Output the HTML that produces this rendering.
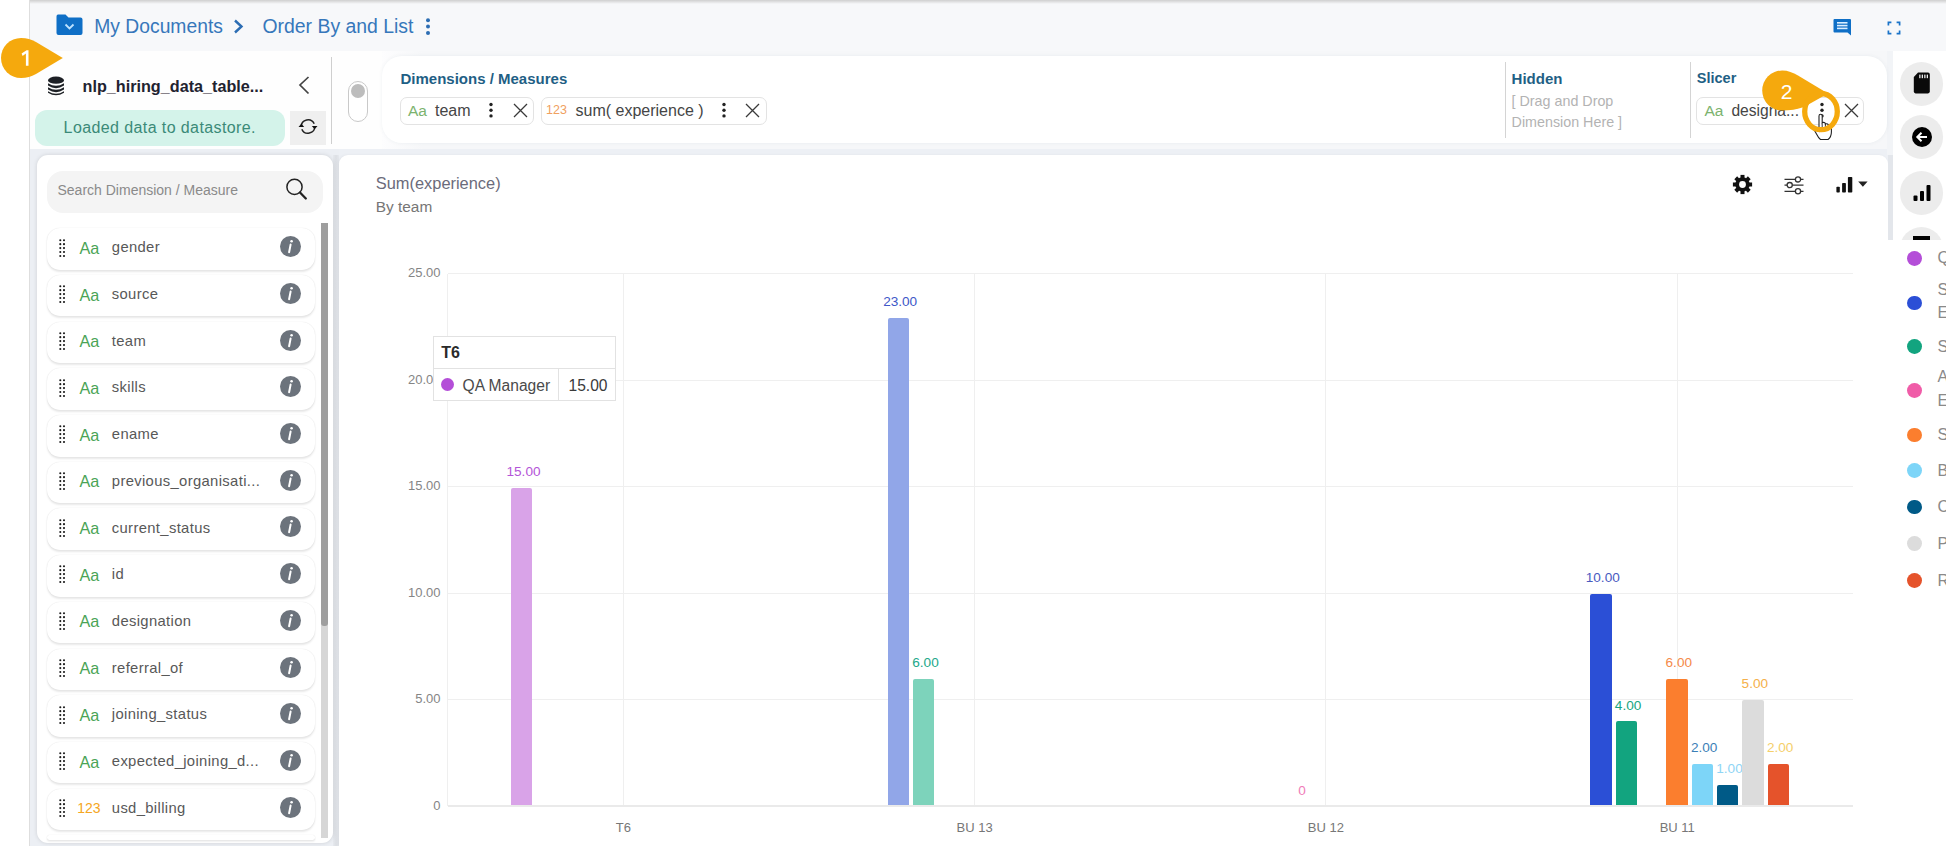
<!DOCTYPE html>
<html><head><meta charset="utf-8"><style>
html,body{margin:0;padding:0;width:1946px;height:846px;overflow:hidden;background:#fff;}
body{position:relative;font-family:"Liberation Sans", sans-serif;}
.t{position:absolute;line-height:1;white-space:nowrap;font-family:"Liberation Sans", sans-serif;}
.r{position:absolute;}
</style></head><body>
<div class="r" style="left:0px;top:0px;width:1946px;height:846px;background:#ffffff;"></div>
<div class="r" style="left:30px;top:51px;width:1916px;height:795px;background:#edf0f5;"></div>
<div class="r" style="left:30px;top:0px;width:1916px;height:51px;background:#f7f8fa;"></div>
<div class="r" style="left:30px;top:0px;width:1916px;height:4px;background:linear-gradient(#cfcfcf,#f7f8fa);"></div>
<div class="r" style="left:29px;top:0px;width:1px;height:846px;background:#dedede;"></div>
<div class="r" style="left:1887px;top:51px;width:6px;height:104px;background:#f2f4f7;"></div>
<div class="r" style="left:30px;top:51px;width:1857px;height:98px;background:#fefefe;"></div>
<div class="r" style="left:382px;top:51px;width:1505px;height:98px;background:linear-gradient(90deg,#fdfdfe,#f6f7f9 40px);"></div>
<svg class="r" style="left:56px;top:14px" width="27" height="22" viewBox="0 0 27 22">
<path d="M2 0.5 H9.5 L12.5 3.5 H24.5 Q26.5 3.5 26.5 5.5 V19 Q26.5 21 24.5 21 H2.5 Q0.5 21 0.5 19 V2.5 Q0.5 0.5 2 0.5Z" fill="#0f6fc6"/>
<path d="M9.5 10.5 L13.5 14.5 L17.5 10.5" stroke="#bfe3ff" stroke-width="1.8" fill="none"/>
</svg>
<div class="t" style="left:94.30px;top:17.06px;font-size:19.3px;color:#3677bb;font-weight:400;">My Documents</div>
<svg class="r" style="left:232px;top:18px" width="14" height="17" viewBox="0 0 14 17"><path d="M3 2.5 L9.5 8.5 L3 14.5" stroke="#2c6db3" stroke-width="2.4" fill="none"/></svg>
<div class="t" style="left:262.50px;top:16.98px;font-size:19.4px;color:#3677bb;font-weight:400;">Order By and List</div>
<svg class="r" style="left:424px;top:17px" width="8" height="20" viewBox="0 0 8 20"><circle cx="4" cy="3.2" r="2" fill="#2c6db3"/><circle cx="4" cy="9.6" r="2" fill="#2c6db3"/><circle cx="4" cy="16" r="2" fill="#2c6db3"/></svg>
<svg class="r" style="left:1833px;top:18px" width="19" height="18" viewBox="0 0 19 18">
<path d="M1.5 1 H17 Q18 1 18 2 V17.5 L14.5 14.5 H1.5 Q0.5 14.5 0.5 13.5 V2 Q0.5 1 1.5 1Z" fill="#0f6fc6"/>
<rect x="4" y="4" width="10.5" height="1.6" fill="#dbeeff"/><rect x="4" y="6.8" width="10.5" height="1.6" fill="#dbeeff"/><rect x="4" y="9.6" width="10.5" height="1.6" fill="#dbeeff"/>
</svg>
<svg class="r" style="left:1887px;top:21px" width="14" height="14" viewBox="0 0 14 14">
<path d="M1.4 4.4 V1.4 H4.4 M9.6 1.4 H12.6 V4.4 M12.6 9.6 V12.6 H9.6 M4.4 12.6 H1.4 V9.6" stroke="#1a73c8" stroke-width="1.7" fill="none"/>
</svg>
<svg class="r" style="left:47px;top:76px" width="18" height="21" viewBox="0 0 18 21">
<ellipse cx="9" cy="4.2" rx="8" ry="3.6" fill="#1d2025"/>
<path d="M1 7.2 Q9 12.5 17 7.2 V9.6 Q9 14.8 1 9.6Z" fill="#1d2025"/>
<path d="M1 11.2 Q9 16.5 17 11.2 V13.6 Q9 18.8 1 13.6Z" fill="#1d2025"/>
<path d="M1 15.2 Q9 20.5 17 15.2 V16.8 Q9 21.8 1 16.8Z" fill="#1d2025"/>
</svg>
<div class="t" style="left:82.50px;top:77.79px;font-size:16.2px;color:#1f2330;font-weight:700;">nlp_hiring_data_table...</div>
<svg class="r" style="left:297px;top:75px" width="14" height="21" viewBox="0 0 14 21"><path d="M11.5 2 L3 10 L11.5 18.5" stroke="#444" stroke-width="1.7" fill="none"/></svg>
<div class="r" style="left:35px;top:110px;width:250px;height:36px;background:#d4f3ea;border-radius:12px;"></div>
<div class="t" style="left:63.60px;top:119.66px;font-size:16px;color:#3b8a78;font-weight:400;letter-spacing:0.4px;">Loaded data to datastore.</div>
<div class="r" style="left:290px;top:111px;width:36px;height:34px;background:#efefef;"></div>
<svg class="r" style="left:297px;top:117px" width="22" height="19" viewBox="0 0 22 19">
<path d="M4.2 9.5 A6.8 6.8 0 0 1 17.2 6.8" stroke="#222" stroke-width="1.5" fill="none"/>
<path d="M17.8 9.5 A6.8 6.8 0 0 1 4.8 12.2" stroke="#222" stroke-width="1.5" fill="none"/>
<path d="M14.8 9 H20.5 L17.6 12.2Z" fill="#111"/>
<path d="M1.5 10 H7.2 L4.4 6.8Z" fill="#111"/>
</svg>
<div class="r" style="left:331px;top:57px;width:1px;height:87px;background:#cfcfcf;"></div>
<div class="r" style="left:348px;top:81px;width:20px;height:41px;background:#ffffff;border:1.6px solid #c9c9c9;border-radius:11px;box-sizing:border-box;"></div>
<div class="r" style="left:351px;top:84px;width:14px;height:14px;border-radius:50%;background:#bdbdbd"></div>
<div class="r" style="left:382px;top:56px;width:1505px;height:87px;background:#ffffff;border-radius:20px;box-shadow:0 0 4px rgba(40,60,90,0.06);"></div>
<div class="t" style="left:400.50px;top:71.40px;font-size:15px;color:#1f5f85;font-weight:700;">Dimensions / Measures</div>
<div class="r" style="left:400px;top:97px;width:134px;height:28px;background:#ffffff;border:1px solid #e3e3e3;border-radius:7px;box-sizing:border-box;"></div>
<div class="t" style="left:408.00px;top:103.08px;font-size:15.5px;color:#7cb36f;font-weight:400;">Aa</div>
<div class="t" style="left:435.00px;top:102.66px;font-size:16px;color:#454545;font-weight:400;">team</div>
<svg class="r" style="left:488.3px;top:102px" width="6" height="17" viewBox="0 0 6 17"><circle cx="3" cy="2.5" r="1.7" fill="#222"/><circle cx="3" cy="8.2" r="1.7" fill="#222"/><circle cx="3" cy="13.9" r="1.7" fill="#222"/></svg>
<svg class="r" style="left:513px;top:103px" width="15" height="15" viewBox="0 0 15 15"><path d="M1 1 L14 14 M14 1 L1 14" stroke="#3a3a3a" stroke-width="1.3" fill="none"/></svg>
<div class="r" style="left:540.5px;top:97px;width:226px;height:28px;background:#ffffff;border:1px solid #e3e3e3;border-radius:7px;box-sizing:border-box;"></div>
<div class="t" style="left:546.00px;top:103.92px;font-size:12.5px;color:#f0a060;font-weight:400;">123</div>
<div class="t" style="left:575.50px;top:102.66px;font-size:16px;color:#454545;font-weight:400;">sum( experience )</div>
<svg class="r" style="left:720.7px;top:102px" width="6" height="17" viewBox="0 0 6 17"><circle cx="3" cy="2.5" r="1.7" fill="#222"/><circle cx="3" cy="8.2" r="1.7" fill="#222"/><circle cx="3" cy="13.9" r="1.7" fill="#222"/></svg>
<svg class="r" style="left:744.6px;top:103px" width="15" height="15" viewBox="0 0 15 15"><path d="M1 1 L14 14 M14 1 L1 14" stroke="#3a3a3a" stroke-width="1.3" fill="none"/></svg>
<div class="r" style="left:1505px;top:62px;width:1px;height:76px;background:#d4d4d4;"></div>
<div class="t" style="left:1511.60px;top:71.30px;font-size:15px;color:#1f5f85;font-weight:700;">Hidden</div>
<div class="t" style="left:1511.60px;top:93.90px;font-size:14.3px;color:#b3b3b3;font-weight:400;">[ Drag and Drop</div>
<div class="t" style="left:1511.60px;top:114.60px;font-size:14.3px;color:#b3b3b3;font-weight:400;">Dimension Here ]</div>
<div class="r" style="left:1690px;top:62px;width:1px;height:76px;background:#d4d4d4;"></div>
<div class="t" style="left:1696.80px;top:71.23px;font-size:14.5px;color:#1f5f85;font-weight:700;">Slicer</div>
<div class="r" style="left:1696.4px;top:97px;width:168px;height:28px;background:#ffffff;border:1px solid #e3e3e3;border-radius:7px;box-sizing:border-box;"></div>
<div class="t" style="left:1704.40px;top:103.08px;font-size:15.5px;color:#7cb36f;font-weight:400;">Aa</div>
<div class="t" style="left:1731.40px;top:102.99px;font-size:15.6px;color:#454545;font-weight:400;">designa...</div>
<svg class="r" style="left:1819px;top:102px" width="6" height="17" viewBox="0 0 6 17"><circle cx="3" cy="2.5" r="1.7" fill="#222"/><circle cx="3" cy="8.2" r="1.7" fill="#222"/><circle cx="3" cy="13.9" r="1.7" fill="#222"/></svg>
<svg class="r" style="left:1843.5px;top:103px" width="15" height="15" viewBox="0 0 15 15"><path d="M1 1 L14 14 M14 1 L1 14" stroke="#3a3a3a" stroke-width="1.3" fill="none"/></svg>
<div class="r" style="left:1893px;top:51px;width:53px;height:795px;background:#ffffff;"></div>
<div class="r" style="left:1899.8px;top:62.3px;width:43.4px;height:43.4px;border-radius:50%;background:#ececec"></div>
<div class="r" style="left:1899.8px;top:115.3px;width:43.4px;height:43.4px;border-radius:50%;background:#ececec"></div>
<div class="r" style="left:1899.8px;top:171.3px;width:43.4px;height:43.4px;border-radius:50%;background:#ececec"></div>
<div class="r" style="left:1899.8px;top:227.3px;width:43.4px;height:43.4px;border-radius:50%;background:#ececec"></div>
<svg class="r" style="left:1912px;top:72px" width="20" height="23" viewBox="0 0 20 23">
<path d="M6 0.6 H16 Q17.8 0.6 17.8 2.4 V19.6 Q17.8 21.4 16 21.4 H3.6 Q1.8 21.4 1.8 19.6 V5Z" fill="#0a0a0a"/>
<rect x="7.2" y="2.6" width="1.3" height="3.6" fill="#ececec"/><rect x="9.7" y="2.6" width="1.3" height="3.6" fill="#ececec"/><rect x="12.2" y="2.6" width="1.3" height="3.6" fill="#ececec"/><rect x="14.7" y="2.6" width="1.3" height="3.6" fill="#ececec"/>
</svg>
<svg class="r" style="left:1911px;top:126px" width="22" height="22" viewBox="0 0 22 22">
<circle cx="11" cy="11" r="10" fill="#000"/>
<path d="M16 11 H6.5 M10.5 6.8 L6.3 11 L10.5 15.2" stroke="#fff" stroke-width="2" fill="none"/>
</svg>
<svg class="r" style="left:1911px;top:182px" width="22" height="22" viewBox="0 0 22 22">
<rect x="2.5" y="13.5" width="4" height="5.5" rx="1" fill="#000"/><rect x="9" y="9" width="4" height="10" rx="1" fill="#000"/><rect x="15.5" y="3" width="4" height="16" rx="1" fill="#000"/>
</svg>
<div class="r" style="left:1913px;top:236px;width:17px;height:4px;background:#000;"></div>
<div class="r" style="left:30px;top:149px;width:309px;height:697px;background:#eceff4;"></div>
<div class="r" style="left:333px;top:155px;width:6px;height:691px;background:linear-gradient(90deg,#e6e9ee,#dcdfe4 50%,#e6e9ee);"></div>
<div class="r" style="left:36.5px;top:155.4px;width:296.5px;height:688px;background:#ffffff;border-radius:11px;box-shadow:0 0 4px rgba(0,0,0,0.13);"></div>
<div class="r" style="left:47.2px;top:170.7px;width:276px;height:42.3px;background:#f4f4f4;border-radius:16px;"></div>
<div class="t" style="left:57.50px;top:183.45px;font-size:14px;color:#8a8a8a;font-weight:400;">Search Dimension / Measure</div>
<svg class="r" style="left:284px;top:176px" width="26" height="26" viewBox="0 0 26 26"><circle cx="10.5" cy="10.9" r="7.6" stroke="#222" stroke-width="1.5" fill="none"/><path d="M16 16.5 L21.8 22.5" stroke="#222" stroke-width="2.3" stroke-linecap="round"/></svg>
<div class="r" style="left:46.6px;top:228.2px;width:268.8px;height:41.5px;background:#ffffff;border-radius:13px;box-shadow:0 1.5px 2px rgba(0,0,0,0.09),0 0 1px rgba(0,0,0,0.12);"></div>
<svg class="r" style="left:58.6px;top:238.50px" width="7" height="19" viewBox="0 0 7 19"><circle cx="1.3" cy="1.20" r="1.05" fill="#1a1a1a"/><circle cx="5" cy="1.20" r="1.05" fill="#1a1a1a"/><circle cx="1.3" cy="5.15" r="1.05" fill="#1a1a1a"/><circle cx="5" cy="5.15" r="1.05" fill="#1a1a1a"/><circle cx="1.3" cy="9.10" r="1.05" fill="#1a1a1a"/><circle cx="5" cy="9.10" r="1.05" fill="#1a1a1a"/><circle cx="1.3" cy="13.05" r="1.05" fill="#1a1a1a"/><circle cx="5" cy="13.05" r="1.05" fill="#1a1a1a"/><circle cx="1.3" cy="17.00" r="1.05" fill="#1a1a1a"/><circle cx="5" cy="17.00" r="1.05" fill="#1a1a1a"/></svg>
<div class="t" style="left:79.40px;top:239.89px;font-size:16.2px;color:#4aa456;font-weight:400;">Aa</div>
<div class="t" style="left:111.80px;top:240.37px;font-size:14.8px;color:#585858;font-weight:400;letter-spacing:0.35px;">gender</div>
<div class="r" style="left:280.0px;top:236.20px;width:21px;height:21px;border-radius:50%;background:#6c737c"></div>
<svg class="r" style="left:284px;top:236.20px" width="13" height="21" viewBox="0 0 13 21"><circle cx="7.6" cy="5.3" r="1.3" fill="#fff"/><path d="M6.6 8.6 L5.1 16.2" stroke="#fff" stroke-width="2" stroke-linecap="round"/></svg>
<div class="r" style="left:46.6px;top:274.9px;width:268.8px;height:41.5px;background:#ffffff;border-radius:13px;box-shadow:0 1.5px 2px rgba(0,0,0,0.09),0 0 1px rgba(0,0,0,0.12);"></div>
<svg class="r" style="left:58.6px;top:285.20px" width="7" height="19" viewBox="0 0 7 19"><circle cx="1.3" cy="1.20" r="1.05" fill="#1a1a1a"/><circle cx="5" cy="1.20" r="1.05" fill="#1a1a1a"/><circle cx="1.3" cy="5.15" r="1.05" fill="#1a1a1a"/><circle cx="5" cy="5.15" r="1.05" fill="#1a1a1a"/><circle cx="1.3" cy="9.10" r="1.05" fill="#1a1a1a"/><circle cx="5" cy="9.10" r="1.05" fill="#1a1a1a"/><circle cx="1.3" cy="13.05" r="1.05" fill="#1a1a1a"/><circle cx="5" cy="13.05" r="1.05" fill="#1a1a1a"/><circle cx="1.3" cy="17.00" r="1.05" fill="#1a1a1a"/><circle cx="5" cy="17.00" r="1.05" fill="#1a1a1a"/></svg>
<div class="t" style="left:79.40px;top:286.59px;font-size:16.2px;color:#4aa456;font-weight:400;">Aa</div>
<div class="t" style="left:111.80px;top:287.07px;font-size:14.8px;color:#585858;font-weight:400;letter-spacing:0.35px;">source</div>
<div class="r" style="left:280.0px;top:282.90px;width:21px;height:21px;border-radius:50%;background:#6c737c"></div>
<svg class="r" style="left:284px;top:282.90px" width="13" height="21" viewBox="0 0 13 21"><circle cx="7.6" cy="5.3" r="1.3" fill="#fff"/><path d="M6.6 8.6 L5.1 16.2" stroke="#fff" stroke-width="2" stroke-linecap="round"/></svg>
<div class="r" style="left:46.6px;top:321.6px;width:268.8px;height:41.5px;background:#ffffff;border-radius:13px;box-shadow:0 1.5px 2px rgba(0,0,0,0.09),0 0 1px rgba(0,0,0,0.12);"></div>
<svg class="r" style="left:58.6px;top:331.90px" width="7" height="19" viewBox="0 0 7 19"><circle cx="1.3" cy="1.20" r="1.05" fill="#1a1a1a"/><circle cx="5" cy="1.20" r="1.05" fill="#1a1a1a"/><circle cx="1.3" cy="5.15" r="1.05" fill="#1a1a1a"/><circle cx="5" cy="5.15" r="1.05" fill="#1a1a1a"/><circle cx="1.3" cy="9.10" r="1.05" fill="#1a1a1a"/><circle cx="5" cy="9.10" r="1.05" fill="#1a1a1a"/><circle cx="1.3" cy="13.05" r="1.05" fill="#1a1a1a"/><circle cx="5" cy="13.05" r="1.05" fill="#1a1a1a"/><circle cx="1.3" cy="17.00" r="1.05" fill="#1a1a1a"/><circle cx="5" cy="17.00" r="1.05" fill="#1a1a1a"/></svg>
<div class="t" style="left:79.40px;top:333.29px;font-size:16.2px;color:#4aa456;font-weight:400;">Aa</div>
<div class="t" style="left:111.80px;top:333.77px;font-size:14.8px;color:#585858;font-weight:400;letter-spacing:0.35px;">team</div>
<div class="r" style="left:280.0px;top:329.60px;width:21px;height:21px;border-radius:50%;background:#6c737c"></div>
<svg class="r" style="left:284px;top:329.60px" width="13" height="21" viewBox="0 0 13 21"><circle cx="7.6" cy="5.3" r="1.3" fill="#fff"/><path d="M6.6 8.6 L5.1 16.2" stroke="#fff" stroke-width="2" stroke-linecap="round"/></svg>
<div class="r" style="left:46.6px;top:368.3px;width:268.8px;height:41.5px;background:#ffffff;border-radius:13px;box-shadow:0 1.5px 2px rgba(0,0,0,0.09),0 0 1px rgba(0,0,0,0.12);"></div>
<svg class="r" style="left:58.6px;top:378.60px" width="7" height="19" viewBox="0 0 7 19"><circle cx="1.3" cy="1.20" r="1.05" fill="#1a1a1a"/><circle cx="5" cy="1.20" r="1.05" fill="#1a1a1a"/><circle cx="1.3" cy="5.15" r="1.05" fill="#1a1a1a"/><circle cx="5" cy="5.15" r="1.05" fill="#1a1a1a"/><circle cx="1.3" cy="9.10" r="1.05" fill="#1a1a1a"/><circle cx="5" cy="9.10" r="1.05" fill="#1a1a1a"/><circle cx="1.3" cy="13.05" r="1.05" fill="#1a1a1a"/><circle cx="5" cy="13.05" r="1.05" fill="#1a1a1a"/><circle cx="1.3" cy="17.00" r="1.05" fill="#1a1a1a"/><circle cx="5" cy="17.00" r="1.05" fill="#1a1a1a"/></svg>
<div class="t" style="left:79.40px;top:379.99px;font-size:16.2px;color:#4aa456;font-weight:400;">Aa</div>
<div class="t" style="left:111.80px;top:380.47px;font-size:14.8px;color:#585858;font-weight:400;letter-spacing:0.35px;">skills</div>
<div class="r" style="left:280.0px;top:376.30px;width:21px;height:21px;border-radius:50%;background:#6c737c"></div>
<svg class="r" style="left:284px;top:376.30px" width="13" height="21" viewBox="0 0 13 21"><circle cx="7.6" cy="5.3" r="1.3" fill="#fff"/><path d="M6.6 8.6 L5.1 16.2" stroke="#fff" stroke-width="2" stroke-linecap="round"/></svg>
<div class="r" style="left:46.6px;top:415.0px;width:268.8px;height:41.5px;background:#ffffff;border-radius:13px;box-shadow:0 1.5px 2px rgba(0,0,0,0.09),0 0 1px rgba(0,0,0,0.12);"></div>
<svg class="r" style="left:58.6px;top:425.30px" width="7" height="19" viewBox="0 0 7 19"><circle cx="1.3" cy="1.20" r="1.05" fill="#1a1a1a"/><circle cx="5" cy="1.20" r="1.05" fill="#1a1a1a"/><circle cx="1.3" cy="5.15" r="1.05" fill="#1a1a1a"/><circle cx="5" cy="5.15" r="1.05" fill="#1a1a1a"/><circle cx="1.3" cy="9.10" r="1.05" fill="#1a1a1a"/><circle cx="5" cy="9.10" r="1.05" fill="#1a1a1a"/><circle cx="1.3" cy="13.05" r="1.05" fill="#1a1a1a"/><circle cx="5" cy="13.05" r="1.05" fill="#1a1a1a"/><circle cx="1.3" cy="17.00" r="1.05" fill="#1a1a1a"/><circle cx="5" cy="17.00" r="1.05" fill="#1a1a1a"/></svg>
<div class="t" style="left:79.40px;top:426.69px;font-size:16.2px;color:#4aa456;font-weight:400;">Aa</div>
<div class="t" style="left:111.80px;top:427.17px;font-size:14.8px;color:#585858;font-weight:400;letter-spacing:0.35px;">ename</div>
<div class="r" style="left:280.0px;top:423.00px;width:21px;height:21px;border-radius:50%;background:#6c737c"></div>
<svg class="r" style="left:284px;top:423.00px" width="13" height="21" viewBox="0 0 13 21"><circle cx="7.6" cy="5.3" r="1.3" fill="#fff"/><path d="M6.6 8.6 L5.1 16.2" stroke="#fff" stroke-width="2" stroke-linecap="round"/></svg>
<div class="r" style="left:46.6px;top:461.7px;width:268.8px;height:41.5px;background:#ffffff;border-radius:13px;box-shadow:0 1.5px 2px rgba(0,0,0,0.09),0 0 1px rgba(0,0,0,0.12);"></div>
<svg class="r" style="left:58.6px;top:472.00px" width="7" height="19" viewBox="0 0 7 19"><circle cx="1.3" cy="1.20" r="1.05" fill="#1a1a1a"/><circle cx="5" cy="1.20" r="1.05" fill="#1a1a1a"/><circle cx="1.3" cy="5.15" r="1.05" fill="#1a1a1a"/><circle cx="5" cy="5.15" r="1.05" fill="#1a1a1a"/><circle cx="1.3" cy="9.10" r="1.05" fill="#1a1a1a"/><circle cx="5" cy="9.10" r="1.05" fill="#1a1a1a"/><circle cx="1.3" cy="13.05" r="1.05" fill="#1a1a1a"/><circle cx="5" cy="13.05" r="1.05" fill="#1a1a1a"/><circle cx="1.3" cy="17.00" r="1.05" fill="#1a1a1a"/><circle cx="5" cy="17.00" r="1.05" fill="#1a1a1a"/></svg>
<div class="t" style="left:79.40px;top:473.39px;font-size:16.2px;color:#4aa456;font-weight:400;">Aa</div>
<div class="t" style="left:111.80px;top:473.87px;font-size:14.8px;color:#585858;font-weight:400;letter-spacing:0.35px;">previous_organisati...</div>
<div class="r" style="left:280.0px;top:469.70px;width:21px;height:21px;border-radius:50%;background:#6c737c"></div>
<svg class="r" style="left:284px;top:469.70px" width="13" height="21" viewBox="0 0 13 21"><circle cx="7.6" cy="5.3" r="1.3" fill="#fff"/><path d="M6.6 8.6 L5.1 16.2" stroke="#fff" stroke-width="2" stroke-linecap="round"/></svg>
<div class="r" style="left:46.6px;top:508.4px;width:268.8px;height:41.5px;background:#ffffff;border-radius:13px;box-shadow:0 1.5px 2px rgba(0,0,0,0.09),0 0 1px rgba(0,0,0,0.12);"></div>
<svg class="r" style="left:58.6px;top:518.70px" width="7" height="19" viewBox="0 0 7 19"><circle cx="1.3" cy="1.20" r="1.05" fill="#1a1a1a"/><circle cx="5" cy="1.20" r="1.05" fill="#1a1a1a"/><circle cx="1.3" cy="5.15" r="1.05" fill="#1a1a1a"/><circle cx="5" cy="5.15" r="1.05" fill="#1a1a1a"/><circle cx="1.3" cy="9.10" r="1.05" fill="#1a1a1a"/><circle cx="5" cy="9.10" r="1.05" fill="#1a1a1a"/><circle cx="1.3" cy="13.05" r="1.05" fill="#1a1a1a"/><circle cx="5" cy="13.05" r="1.05" fill="#1a1a1a"/><circle cx="1.3" cy="17.00" r="1.05" fill="#1a1a1a"/><circle cx="5" cy="17.00" r="1.05" fill="#1a1a1a"/></svg>
<div class="t" style="left:79.40px;top:520.09px;font-size:16.2px;color:#4aa456;font-weight:400;">Aa</div>
<div class="t" style="left:111.80px;top:520.57px;font-size:14.8px;color:#585858;font-weight:400;letter-spacing:0.35px;">current_status</div>
<div class="r" style="left:280.0px;top:516.40px;width:21px;height:21px;border-radius:50%;background:#6c737c"></div>
<svg class="r" style="left:284px;top:516.40px" width="13" height="21" viewBox="0 0 13 21"><circle cx="7.6" cy="5.3" r="1.3" fill="#fff"/><path d="M6.6 8.6 L5.1 16.2" stroke="#fff" stroke-width="2" stroke-linecap="round"/></svg>
<div class="r" style="left:46.6px;top:555.1px;width:268.8px;height:41.5px;background:#ffffff;border-radius:13px;box-shadow:0 1.5px 2px rgba(0,0,0,0.09),0 0 1px rgba(0,0,0,0.12);"></div>
<svg class="r" style="left:58.6px;top:565.40px" width="7" height="19" viewBox="0 0 7 19"><circle cx="1.3" cy="1.20" r="1.05" fill="#1a1a1a"/><circle cx="5" cy="1.20" r="1.05" fill="#1a1a1a"/><circle cx="1.3" cy="5.15" r="1.05" fill="#1a1a1a"/><circle cx="5" cy="5.15" r="1.05" fill="#1a1a1a"/><circle cx="1.3" cy="9.10" r="1.05" fill="#1a1a1a"/><circle cx="5" cy="9.10" r="1.05" fill="#1a1a1a"/><circle cx="1.3" cy="13.05" r="1.05" fill="#1a1a1a"/><circle cx="5" cy="13.05" r="1.05" fill="#1a1a1a"/><circle cx="1.3" cy="17.00" r="1.05" fill="#1a1a1a"/><circle cx="5" cy="17.00" r="1.05" fill="#1a1a1a"/></svg>
<div class="t" style="left:79.40px;top:566.79px;font-size:16.2px;color:#4aa456;font-weight:400;">Aa</div>
<div class="t" style="left:111.80px;top:567.27px;font-size:14.8px;color:#585858;font-weight:400;letter-spacing:0.35px;">id</div>
<div class="r" style="left:280.0px;top:563.10px;width:21px;height:21px;border-radius:50%;background:#6c737c"></div>
<svg class="r" style="left:284px;top:563.10px" width="13" height="21" viewBox="0 0 13 21"><circle cx="7.6" cy="5.3" r="1.3" fill="#fff"/><path d="M6.6 8.6 L5.1 16.2" stroke="#fff" stroke-width="2" stroke-linecap="round"/></svg>
<div class="r" style="left:46.6px;top:601.8px;width:268.8px;height:41.5px;background:#ffffff;border-radius:13px;box-shadow:0 1.5px 2px rgba(0,0,0,0.09),0 0 1px rgba(0,0,0,0.12);"></div>
<svg class="r" style="left:58.6px;top:612.10px" width="7" height="19" viewBox="0 0 7 19"><circle cx="1.3" cy="1.20" r="1.05" fill="#1a1a1a"/><circle cx="5" cy="1.20" r="1.05" fill="#1a1a1a"/><circle cx="1.3" cy="5.15" r="1.05" fill="#1a1a1a"/><circle cx="5" cy="5.15" r="1.05" fill="#1a1a1a"/><circle cx="1.3" cy="9.10" r="1.05" fill="#1a1a1a"/><circle cx="5" cy="9.10" r="1.05" fill="#1a1a1a"/><circle cx="1.3" cy="13.05" r="1.05" fill="#1a1a1a"/><circle cx="5" cy="13.05" r="1.05" fill="#1a1a1a"/><circle cx="1.3" cy="17.00" r="1.05" fill="#1a1a1a"/><circle cx="5" cy="17.00" r="1.05" fill="#1a1a1a"/></svg>
<div class="t" style="left:79.40px;top:613.49px;font-size:16.2px;color:#4aa456;font-weight:400;">Aa</div>
<div class="t" style="left:111.80px;top:613.97px;font-size:14.8px;color:#585858;font-weight:400;letter-spacing:0.35px;">designation</div>
<div class="r" style="left:280.0px;top:609.80px;width:21px;height:21px;border-radius:50%;background:#6c737c"></div>
<svg class="r" style="left:284px;top:609.80px" width="13" height="21" viewBox="0 0 13 21"><circle cx="7.6" cy="5.3" r="1.3" fill="#fff"/><path d="M6.6 8.6 L5.1 16.2" stroke="#fff" stroke-width="2" stroke-linecap="round"/></svg>
<div class="r" style="left:46.6px;top:648.5px;width:268.8px;height:41.5px;background:#ffffff;border-radius:13px;box-shadow:0 1.5px 2px rgba(0,0,0,0.09),0 0 1px rgba(0,0,0,0.12);"></div>
<svg class="r" style="left:58.6px;top:658.80px" width="7" height="19" viewBox="0 0 7 19"><circle cx="1.3" cy="1.20" r="1.05" fill="#1a1a1a"/><circle cx="5" cy="1.20" r="1.05" fill="#1a1a1a"/><circle cx="1.3" cy="5.15" r="1.05" fill="#1a1a1a"/><circle cx="5" cy="5.15" r="1.05" fill="#1a1a1a"/><circle cx="1.3" cy="9.10" r="1.05" fill="#1a1a1a"/><circle cx="5" cy="9.10" r="1.05" fill="#1a1a1a"/><circle cx="1.3" cy="13.05" r="1.05" fill="#1a1a1a"/><circle cx="5" cy="13.05" r="1.05" fill="#1a1a1a"/><circle cx="1.3" cy="17.00" r="1.05" fill="#1a1a1a"/><circle cx="5" cy="17.00" r="1.05" fill="#1a1a1a"/></svg>
<div class="t" style="left:79.40px;top:660.19px;font-size:16.2px;color:#4aa456;font-weight:400;">Aa</div>
<div class="t" style="left:111.80px;top:660.67px;font-size:14.8px;color:#585858;font-weight:400;letter-spacing:0.35px;">referral_of</div>
<div class="r" style="left:280.0px;top:656.50px;width:21px;height:21px;border-radius:50%;background:#6c737c"></div>
<svg class="r" style="left:284px;top:656.50px" width="13" height="21" viewBox="0 0 13 21"><circle cx="7.6" cy="5.3" r="1.3" fill="#fff"/><path d="M6.6 8.6 L5.1 16.2" stroke="#fff" stroke-width="2" stroke-linecap="round"/></svg>
<div class="r" style="left:46.6px;top:695.2px;width:268.8px;height:41.5px;background:#ffffff;border-radius:13px;box-shadow:0 1.5px 2px rgba(0,0,0,0.09),0 0 1px rgba(0,0,0,0.12);"></div>
<svg class="r" style="left:58.6px;top:705.50px" width="7" height="19" viewBox="0 0 7 19"><circle cx="1.3" cy="1.20" r="1.05" fill="#1a1a1a"/><circle cx="5" cy="1.20" r="1.05" fill="#1a1a1a"/><circle cx="1.3" cy="5.15" r="1.05" fill="#1a1a1a"/><circle cx="5" cy="5.15" r="1.05" fill="#1a1a1a"/><circle cx="1.3" cy="9.10" r="1.05" fill="#1a1a1a"/><circle cx="5" cy="9.10" r="1.05" fill="#1a1a1a"/><circle cx="1.3" cy="13.05" r="1.05" fill="#1a1a1a"/><circle cx="5" cy="13.05" r="1.05" fill="#1a1a1a"/><circle cx="1.3" cy="17.00" r="1.05" fill="#1a1a1a"/><circle cx="5" cy="17.00" r="1.05" fill="#1a1a1a"/></svg>
<div class="t" style="left:79.40px;top:706.89px;font-size:16.2px;color:#4aa456;font-weight:400;">Aa</div>
<div class="t" style="left:111.80px;top:707.37px;font-size:14.8px;color:#585858;font-weight:400;letter-spacing:0.35px;">joining_status</div>
<div class="r" style="left:280.0px;top:703.20px;width:21px;height:21px;border-radius:50%;background:#6c737c"></div>
<svg class="r" style="left:284px;top:703.20px" width="13" height="21" viewBox="0 0 13 21"><circle cx="7.6" cy="5.3" r="1.3" fill="#fff"/><path d="M6.6 8.6 L5.1 16.2" stroke="#fff" stroke-width="2" stroke-linecap="round"/></svg>
<div class="r" style="left:46.6px;top:741.9px;width:268.8px;height:41.5px;background:#ffffff;border-radius:13px;box-shadow:0 1.5px 2px rgba(0,0,0,0.09),0 0 1px rgba(0,0,0,0.12);"></div>
<svg class="r" style="left:58.6px;top:752.20px" width="7" height="19" viewBox="0 0 7 19"><circle cx="1.3" cy="1.20" r="1.05" fill="#1a1a1a"/><circle cx="5" cy="1.20" r="1.05" fill="#1a1a1a"/><circle cx="1.3" cy="5.15" r="1.05" fill="#1a1a1a"/><circle cx="5" cy="5.15" r="1.05" fill="#1a1a1a"/><circle cx="1.3" cy="9.10" r="1.05" fill="#1a1a1a"/><circle cx="5" cy="9.10" r="1.05" fill="#1a1a1a"/><circle cx="1.3" cy="13.05" r="1.05" fill="#1a1a1a"/><circle cx="5" cy="13.05" r="1.05" fill="#1a1a1a"/><circle cx="1.3" cy="17.00" r="1.05" fill="#1a1a1a"/><circle cx="5" cy="17.00" r="1.05" fill="#1a1a1a"/></svg>
<div class="t" style="left:79.40px;top:753.59px;font-size:16.2px;color:#4aa456;font-weight:400;">Aa</div>
<div class="t" style="left:111.80px;top:754.07px;font-size:14.8px;color:#585858;font-weight:400;letter-spacing:0.35px;">expected_joining_d...</div>
<div class="r" style="left:280.0px;top:749.90px;width:21px;height:21px;border-radius:50%;background:#6c737c"></div>
<svg class="r" style="left:284px;top:749.90px" width="13" height="21" viewBox="0 0 13 21"><circle cx="7.6" cy="5.3" r="1.3" fill="#fff"/><path d="M6.6 8.6 L5.1 16.2" stroke="#fff" stroke-width="2" stroke-linecap="round"/></svg>
<div class="r" style="left:46.6px;top:788.6px;width:268.8px;height:41.5px;background:#ffffff;border-radius:13px;box-shadow:0 1.5px 2px rgba(0,0,0,0.09),0 0 1px rgba(0,0,0,0.12);"></div>
<svg class="r" style="left:58.6px;top:798.90px" width="7" height="19" viewBox="0 0 7 19"><circle cx="1.3" cy="1.20" r="1.05" fill="#1a1a1a"/><circle cx="5" cy="1.20" r="1.05" fill="#1a1a1a"/><circle cx="1.3" cy="5.15" r="1.05" fill="#1a1a1a"/><circle cx="5" cy="5.15" r="1.05" fill="#1a1a1a"/><circle cx="1.3" cy="9.10" r="1.05" fill="#1a1a1a"/><circle cx="5" cy="9.10" r="1.05" fill="#1a1a1a"/><circle cx="1.3" cy="13.05" r="1.05" fill="#1a1a1a"/><circle cx="5" cy="13.05" r="1.05" fill="#1a1a1a"/><circle cx="1.3" cy="17.00" r="1.05" fill="#1a1a1a"/><circle cx="5" cy="17.00" r="1.05" fill="#1a1a1a"/></svg>
<div class="t" style="left:77.30px;top:800.85px;font-size:14px;color:#f5a623;font-weight:400;">123</div>
<div class="t" style="left:111.80px;top:800.77px;font-size:14.8px;color:#585858;font-weight:400;letter-spacing:0.35px;">usd_billing</div>
<div class="r" style="left:280.0px;top:796.60px;width:21px;height:21px;border-radius:50%;background:#6c737c"></div>
<svg class="r" style="left:284px;top:796.60px" width="13" height="21" viewBox="0 0 13 21"><circle cx="7.6" cy="5.3" r="1.3" fill="#fff"/><path d="M6.6 8.6 L5.1 16.2" stroke="#fff" stroke-width="2" stroke-linecap="round"/></svg>
<div class="r" style="left:46.6px;top:835.3px;width:268.8px;height:5px;background:#ffffff;border-radius:13px;box-shadow:0 1.5px 2px rgba(0,0,0,0.09),0 0 1px rgba(0,0,0,0.12);"></div>
<div class="r" style="left:321px;top:223.4px;width:7px;height:614.6px;background:#d6d6d6;"></div>
<div class="r" style="left:321px;top:223.4px;width:7px;height:403px;background:#9e9e9e;border-radius:0 0 3px 3px;"></div>
<div class="r" style="left:339px;top:155px;width:1549px;height:691px;background:#ffffff;border-radius:9px 9px 0 0;box-shadow:-1px 0 3px rgba(0,0,0,0.05);"></div>
<div class="r" style="left:1888px;top:155px;width:5px;height:85px;background:#e3e6eb;"></div>
<div class="t" style="left:375.80px;top:174.92px;font-size:16.4px;color:#6b6b7b;font-weight:400;">Sum(experience)</div>
<div class="t" style="left:375.80px;top:198.96px;font-size:15.4px;color:#767676;font-weight:400;">By team</div>
<svg class="r" style="left:1732px;top:174px" width="21" height="21" viewBox="0 0 21 21">
<g transform="translate(10.5 10.5)" fill="#111">
<circle r="7.2"/>
<rect x="-2" y="-9.6" width="4" height="4" transform="rotate(0)"/><rect x="-2" y="-9.6" width="4" height="4" transform="rotate(45)"/><rect x="-2" y="-9.6" width="4" height="4" transform="rotate(90)"/><rect x="-2" y="-9.6" width="4" height="4" transform="rotate(135)"/><rect x="-2" y="-9.6" width="4" height="4" transform="rotate(180)"/><rect x="-2" y="-9.6" width="4" height="4" transform="rotate(225)"/><rect x="-2" y="-9.6" width="4" height="4" transform="rotate(270)"/><rect x="-2" y="-9.6" width="4" height="4" transform="rotate(315)"/>
<circle r="3.4" fill="#fff"/>
</g></svg>
<svg class="r" style="left:1783px;top:175px" width="22" height="20" viewBox="0 0 22 20">
<path d="M1.5 4.4 H20.5 M1.5 10.1 H20.5 M1.5 16.3 H20.5" stroke="#333" stroke-width="1.3"/>
<circle cx="15" cy="4.4" r="2.6" fill="#fff" stroke="#333" stroke-width="1.3"/>
<circle cx="6.7" cy="10.1" r="2.6" fill="#fff" stroke="#333" stroke-width="1.3"/>
<circle cx="15" cy="16.3" r="2.6" fill="#fff" stroke="#333" stroke-width="1.3"/>
</svg>
<svg class="r" style="left:1835px;top:176px" width="34" height="18" viewBox="0 0 34 18">
<rect x="1.4" y="10.8" width="3.4" height="5.8" rx="0.8" fill="#111"/><rect x="7.1" y="7" width="3.8" height="9.6" rx="0.8" fill="#111"/><rect x="12.9" y="1" width="4.4" height="15.6" rx="0.8" fill="#111"/>
<path d="M23.2 5.4 H32.6 L27.9 10.8Z" fill="#222"/>
</svg>
<div class="r" style="left:447.7px;top:699.0px;width:1405.3px;height:1px;background:#efefef;"></div>
<div class="r" style="left:447.7px;top:592.5px;width:1405.3px;height:1px;background:#efefef;"></div>
<div class="r" style="left:447.7px;top:486.0px;width:1405.3px;height:1px;background:#efefef;"></div>
<div class="r" style="left:447.7px;top:379.5px;width:1405.3px;height:1px;background:#efefef;"></div>
<div class="r" style="left:447.7px;top:273.0px;width:1405.3px;height:1px;background:#efefef;"></div>
<div class="r" style="left:622.85px;top:273.5px;width:1px;height:532.5px;background:#efefef;"></div>
<div class="r" style="left:974.15px;top:273.5px;width:1px;height:532.5px;background:#efefef;"></div>
<div class="r" style="left:1325.45px;top:273.5px;width:1px;height:532.5px;background:#efefef;"></div>
<div class="r" style="left:1676.75px;top:273.5px;width:1px;height:532.5px;background:#efefef;"></div>
<div class="r" style="left:447.2px;top:273.5px;width:1px;height:532.5px;background:#efefef;"></div>
<div class="t" style="right:1505.50px;top:798.60px;font-size:13px;color:#858585;font-weight:400;">0</div>
<div class="t" style="right:1505.50px;top:692.10px;font-size:13px;color:#858585;font-weight:400;">5.00</div>
<div class="t" style="right:1505.50px;top:585.60px;font-size:13px;color:#858585;font-weight:400;">10.00</div>
<div class="t" style="right:1505.50px;top:479.10px;font-size:13px;color:#858585;font-weight:400;">15.00</div>
<div class="t" style="right:1505.50px;top:372.60px;font-size:13px;color:#858585;font-weight:400;">20.00</div>
<div class="t" style="right:1505.50px;top:266.10px;font-size:13px;color:#858585;font-weight:400;">25.00</div>
<div class="t" style="left:423.35px;width:400px;text-align:center;top:821.20px;font-size:13px;color:#777777;font-weight:400;">T6</div>
<div class="t" style="left:774.65px;width:400px;text-align:center;top:821.20px;font-size:13px;color:#777777;font-weight:400;">BU 13</div>
<div class="t" style="left:1125.95px;width:400px;text-align:center;top:821.20px;font-size:13px;color:#777777;font-weight:400;">BU 12</div>
<div class="t" style="left:1477.25px;width:400px;text-align:center;top:821.20px;font-size:13px;color:#777777;font-weight:400;">BU 11</div>
<div class="r" style="left:511.10px;top:487.55px;width:21.2px;height:318.05px;background:#d9a3e8;border-radius:2px 2px 0 0"></div>
<div class="t" style="left:323.50px;width:400px;text-align:center;top:465.14px;font-size:13.6px;color:#b455d8;font-weight:400;">15.00</div>
<div class="r" style="left:887.75px;top:317.71px;width:21.2px;height:487.89px;background:#91a6e8;border-radius:2px 2px 0 0"></div>
<div class="t" style="left:700.15px;width:400px;text-align:center;top:295.30px;font-size:13.6px;color:#4058c8;font-weight:400;">23.00</div>
<div class="r" style="left:913.10px;top:678.62px;width:21.2px;height:126.98px;background:#7dd3bb;border-radius:2px 2px 0 0"></div>
<div class="t" style="left:725.50px;width:400px;text-align:center;top:656.21px;font-size:13.6px;color:#22a88a;font-weight:400;">6.00</div>
<div class="t" style="left:1102.15px;width:400px;text-align:center;top:783.59px;font-size:13.6px;color:#f07cb8;font-weight:400;">0</div>
<div class="r" style="left:1590.35px;top:593.70px;width:21.2px;height:211.90px;background:#2b4fd6;border-radius:2px 2px 0 0"></div>
<div class="t" style="left:1402.75px;width:400px;text-align:center;top:571.29px;font-size:13.6px;color:#4a5bbf;font-weight:400;">10.00</div>
<div class="r" style="left:1615.70px;top:721.08px;width:21.2px;height:84.52px;background:#12a47f;border-radius:2px 2px 0 0"></div>
<div class="t" style="left:1428.10px;width:400px;text-align:center;top:698.67px;font-size:13.6px;color:#18a57f;font-weight:400;">4.00</div>
<div class="r" style="left:1666.40px;top:678.62px;width:21.2px;height:126.98px;background:#fb7e2e;border-radius:2px 2px 0 0"></div>
<div class="t" style="left:1478.80px;width:400px;text-align:center;top:656.21px;font-size:13.6px;color:#f58a4a;font-weight:400;">6.00</div>
<div class="r" style="left:1691.75px;top:763.54px;width:21.2px;height:42.06px;background:#7dd5f8;border-radius:2px 2px 0 0"></div>
<div class="t" style="left:1504.15px;width:400px;text-align:center;top:741.13px;font-size:13.6px;color:#3c7fb7;font-weight:400;">2.00</div>
<div class="r" style="left:1717.10px;top:784.77px;width:21.2px;height:20.83px;background:#005a87;border-radius:2px 2px 0 0"></div>
<div class="t" style="left:1529.50px;width:400px;text-align:center;top:762.36px;font-size:13.6px;color:#8fd5f5;font-weight:400;">1.00</div>
<div class="r" style="left:1742.45px;top:699.85px;width:21.2px;height:105.75px;background:#dcdcdc;border-radius:2px 2px 0 0"></div>
<div class="t" style="left:1554.85px;width:400px;text-align:center;top:677.44px;font-size:13.6px;color:#f5b04a;font-weight:400;">5.00</div>
<div class="r" style="left:1767.80px;top:763.54px;width:21.2px;height:42.06px;background:#e5532b;border-radius:2px 2px 0 0"></div>
<div class="t" style="left:1580.20px;width:400px;text-align:center;top:741.13px;font-size:13.6px;color:#f5cf6a;font-weight:400;">2.00</div>
<div class="r" style="left:447.7px;top:805.2px;width:1405.3px;height:1.6px;background:#eaeaea;"></div>
<div class="r" style="left:433.4px;top:336.3px;width:183px;height:65.1px;background:#ffffff;border:1px solid #e2e2e2;box-sizing:border-box;"></div>
<div class="r" style="left:433.4px;top:368.2px;width:183px;height:1px;background:#e2e2e2;"></div>
<div class="r" style="left:558.3px;top:368.2px;width:1px;height:33.2px;background:#e2e2e2;"></div>
<div class="t" style="left:441.20px;top:344.86px;font-size:16px;color:#2a2a2a;font-weight:700;">T6</div>
<div class="r" style="left:441.2px;top:377.9px;width:13px;height:13px;border-radius:50%;background:#b44ed8"></div>
<div class="t" style="left:462.60px;top:377.59px;font-size:15.6px;color:#4a4a4a;font-weight:400;">QA Manager</div>
<div class="t" style="left:568.50px;top:377.59px;font-size:15.6px;color:#3a3a3a;font-weight:400;">15.00</div>
<div class="r" style="left:1870px;top:240px;width:76px;height:606px;background:#ffffff;"></div>
<div class="r" style="left:1907.2px;top:250.9px;width:14.8px;height:14.8px;border-radius:50%;background:#b44ed8"></div>
<div class="t" style="left:1937.60px;top:250.46px;font-size:16px;color:#8a8a8a;font-weight:400;">Q</div>
<div class="r" style="left:1907.2px;top:295.6px;width:14.8px;height:14.8px;border-radius:50%;background:#2b4fd6"></div>
<div class="t" style="left:1937.60px;top:281.66px;font-size:16px;color:#8a8a8a;font-weight:400;">S</div>
<div class="t" style="left:1937.60px;top:305.06px;font-size:16px;color:#8a8a8a;font-weight:400;">E</div>
<div class="r" style="left:1907.2px;top:339.2px;width:14.8px;height:14.8px;border-radius:50%;background:#12a47f"></div>
<div class="t" style="left:1937.60px;top:338.76px;font-size:16px;color:#8a8a8a;font-weight:400;">S</div>
<div class="r" style="left:1907.2px;top:383.4px;width:14.8px;height:14.8px;border-radius:50%;background:#f05ca8"></div>
<div class="t" style="left:1937.60px;top:369.46px;font-size:16px;color:#8a8a8a;font-weight:400;">A</div>
<div class="t" style="left:1937.60px;top:392.86px;font-size:16px;color:#8a8a8a;font-weight:400;">E</div>
<div class="r" style="left:1907.2px;top:427.6px;width:14.8px;height:14.8px;border-radius:50%;background:#fb7e2e"></div>
<div class="t" style="left:1937.60px;top:427.16px;font-size:16px;color:#8a8a8a;font-weight:400;">S</div>
<div class="r" style="left:1907.2px;top:463.4px;width:14.8px;height:14.8px;border-radius:50%;background:#7dd5f8"></div>
<div class="t" style="left:1937.60px;top:462.96px;font-size:16px;color:#8a8a8a;font-weight:400;">B</div>
<div class="r" style="left:1907.2px;top:499.6px;width:14.8px;height:14.8px;border-radius:50%;background:#005a87"></div>
<div class="t" style="left:1937.60px;top:499.16px;font-size:16px;color:#8a8a8a;font-weight:400;">C</div>
<div class="r" style="left:1907.2px;top:536.4px;width:14.8px;height:14.8px;border-radius:50%;background:#dcdcdc"></div>
<div class="t" style="left:1937.60px;top:535.96px;font-size:16px;color:#8a8a8a;font-weight:400;">P</div>
<div class="r" style="left:1907.2px;top:573.2px;width:14.8px;height:14.8px;border-radius:50%;background:#e5532b"></div>
<div class="t" style="left:1937.60px;top:572.76px;font-size:16px;color:#8a8a8a;font-weight:400;">R</div>
<svg class="r" style="left:0px;top:36px" width="66" height="44" viewBox="0 0 66 44">
<path d="M21 2 C27 2 31 3.5 36 6 L62.8 22 L36 38 C31 40.5 27 42 21 42 A20 20 0 0 1 21 2Z" fill="#f5a90d"/>
</svg>
<svg class="r" style="left:0px;top:0px" width="40" height="80" viewBox="0 0 40 80"><path d="M21.6 53.6 L26.6 50.2 H28.5 V65.8 H25.9 V53.6 L22.6 55.9Z" fill="#fff"/></svg>
<svg class="r" style="left:1811px;top:113px" width="24" height="28" viewBox="0 0 24 28">
<path d="M8 3 Q8 1.2 9.6 1.2 Q11.2 1.2 11.2 3 V10 Q12 9 13.3 9.5 Q14.4 10 14.4 11 Q15.5 10.4 16.6 11 Q17.4 11.6 17.4 12.5 Q18.6 12 19.6 12.8 Q20.4 13.5 20.4 14.8 V19 Q20.4 24 17 26.5 H9.5 Q7.5 25 5.5 21 L3 16.5 Q2.5 15 3.8 14.5 Q5 14.2 6 15.5 L8 18Z" fill="#fff" stroke="#222" stroke-width="1.1"/>
<path d="M11.2 10.5 V15 M14.4 11 V15 M17.4 12.5 V15" stroke="#222" stroke-width="0.9"/>
</svg>
<svg class="r" style="left:1755px;top:64px" width="95" height="75" viewBox="0 0 95 75">
<path d="M27.2 6.5 C33 6.5 38 8.5 43 11.5 L73 29.5 L49 43 C42 45.5 35 46.5 27.2 46.5 A20 20 0 0 1 27.2 6.5Z" fill="#f5a90d"/>
<ellipse cx="66" cy="47.6" rx="16.3" ry="18.1" fill="none" stroke="#f5a90d" stroke-width="5.3"/>
</svg>
<div class="t" style="left:1586.50px;width:400px;text-align:center;top:81.02px;font-size:21px;color:#ffffff;font-weight:400;">2</div>
</body></html>
